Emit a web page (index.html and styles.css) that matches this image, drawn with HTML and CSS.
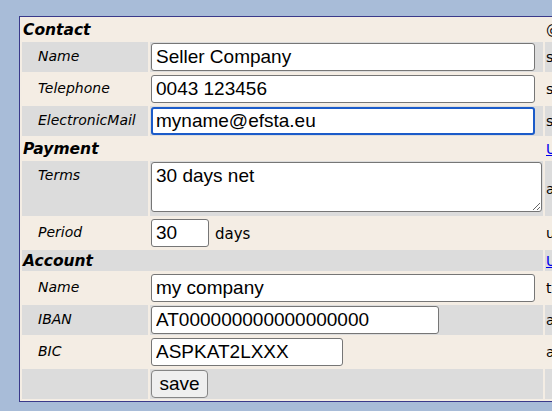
FILE: index.html
```html
<!DOCTYPE html>
<html lang="en">
  <head>
    <meta charset="UTF-8" />
    <meta name="viewport" content="width=device-width, initial-scale=1.0" />
    <title>Seller</title>
    <link rel="stylesheet" href="styles.css">
  </head>
  <body>
    <!-- seller form -->
    <table class="form">
      <tr class="head">
        <td colspan="2">Contact</td>
        <td class="note">@id</td>
      </tr>
      <tr class="alt">
        <td class="label">Name</td>
        <td class="field"><input class="wide" type="text" value="Seller Company" /></td>
        <td class="note">schema:name</td>
      </tr>
      <tr>
        <td class="label">Telephone</td>
        <td class="field"><input class="wide" type="text" value="0043 123456" /></td>
        <td class="note">schema:telephone</td>
      </tr>
      <tr class="alt">
        <td class="label">ElectronicMail</td>
        <td class="field"><input class="wide focused" type="text" value="myname@efsta.eu" /></td>
        <td class="note">schema:email</td>
      </tr>

      <tr class="head">
        <td colspan="2">Payment</td>
        <td class="note"><a href="#">UBL PaymentTerms</a></td>
      </tr>
      <tr class="alt">
        <td class="label">Terms</td>
        <td class="field tall"><textarea>30 days net</textarea></td>
        <td class="note">as free text</td>
      </tr>
      <tr>
        <td class="label">Period</td>
        <td class="field">
          <div class="inline">
            <input class="tiny" type="text" value="30" />
            <span class="unit">days</span>
          </div>
        </td>
        <td class="note">until due date</td>
      </tr>

      <tr class="head alt">
        <td colspan="2">Account</td>
        <td class="note"><a href="#">UBL PayeeFinancialAccount</a></td>
      </tr>
      <tr>
        <td class="label">Name</td>
        <td class="field"><input class="wide" type="text" value="my company" /></td>
        <td class="note">the account holder</td>
      </tr>
      <tr class="alt">
        <td class="label">IBAN</td>
        <td class="field"><input class="medium" type="text" value="AT000000000000000000" /></td>
        <td class="note">account number</td>
      </tr>
      <tr>
        <td class="label">BIC</td>
        <td class="field"><input class="short" type="text" value="ASPKAT2LXXX" /></td>
        <td class="note">address of the bank</td>
      </tr>
      <tr class="alt">
        <td class="label"></td>
        <td class="field"><button>save</button></td>
        <td class="note"></td>
      </tr>
    </table>
  </body>
</html>
```

FILE: styles.css
```css
html,
body {
  overflow: hidden;
}
body {
  margin: 0;
  padding: 16px 0 0 19px;
  background-color: #a8bcd8;
  font-family: "DejaVu Sans", Verdana, sans-serif;
  font-size: 14px;
  color: #000;
}
.form {
  border: 1px solid #3a3a8a;
  border-spacing: 2px;
  background-color: #f4ede4;
}
.form td {
  padding: 0 1px;
}
.alt td {
  background-color: #dcdcdc;
}
.head td {
  height: 21px;
  line-height: 21px;
  font-size: 15.5px;
  font-weight: bold;
  font-style: italic;
  vertical-align: middle;
}
.form .head td {
  padding: 2px 1px 0;
  height: 19px;
  line-height: 19px;
}
.head td.note {
  font-size: 14px;
  font-weight: normal;
  font-style: normal;
}
.label {
  min-width: 109px;
  width: 109px;
  vertical-align: top;
  font-style: italic;
}
.form td.label {
  padding: 6px 1px 0 16px;
}
.form td.field {
  min-width: 391px;
  width: 391px;
  vertical-align: top;
  padding: 1px;
}
.form td.tall {
  padding-bottom: 4px;
}
.note {
  vertical-align: middle;
  white-space: nowrap;
}
.note a {
  color: #0000ee;
}
input,
textarea,
button {
  font-family: "Liberation Sans", Arial, sans-serif;
  font-size: 19px;
  color: #000;
  box-sizing: border-box;
}
input {
  display: block;
  height: 28px;
  margin: 0;
  padding: 0 4px;
  border: 1px solid #767676;
  border-radius: 3px;
  background-color: #fff;
}
input.focused {
  border: 2px solid #1b5bc9;
  padding: 0 3px;
}
.wide {
  width: 384px;
}
.medium {
  width: 288px;
}
.short {
  width: 192px;
}
.tiny {
  width: 58px;
}
textarea {
  display: block;
  width: 391px;
  height: 50px;
  margin: 0;
  padding: 2px 4px;
  border: 1px solid #767676;
  border-radius: 3px;
  background-color: #fff;
}
.inline {
  display: flex;
  align-items: baseline;
  gap: 6px;
}
.unit {
  font-size: 15px;
}
button {
  display: block;
  width: 57px;
  height: 28px;
  padding: 0;
  border: 1px solid #858585;
  border-radius: 4px;
  background-color: #efefef;
}
```
